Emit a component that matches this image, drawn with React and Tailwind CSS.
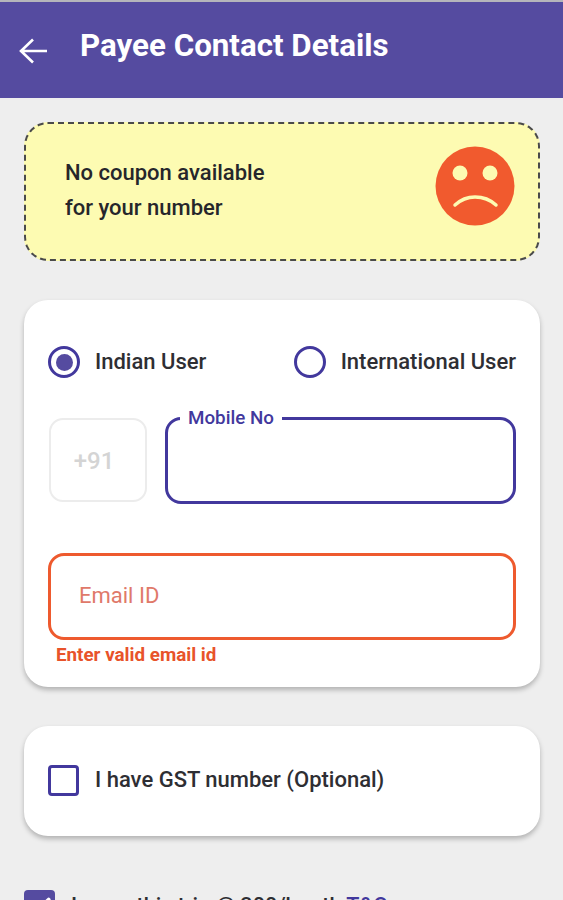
import React from "react";
import { Check } from "lucide-react";

const font = { fontFamily: "Roboto, sans-serif" };

const Radio = ({ checked, label }) => (
  <div className="flex items-center gap-[15px]">
    <div className="w-8 h-8 rounded-full border-[3px] border-[#42389d] flex items-center justify-center">
      {checked && <div className="w-[17px] h-[17px] rounded-full bg-[#554ba0]" />}
    </div>
    <span className="text-[22px] font-medium text-[#2e2e33] -mt-[1px]">{label}</span>
  </div>
);

const App = () => {
  return (
    <div className="w-[563px] h-[900px] overflow-hidden bg-[#eeeeee]" style={font}>
      <div className="h-[98px] bg-[#554ba0] border-t-2 border-[#b5b5bb] flex items-start pl-[19px] pt-[27px] gap-[33px]">
        <svg width="28" height="26" viewBox="0 0 28 26" fill="none" stroke="white" strokeWidth="2.6" className="mt-[9px]">
          <path d="M28 13H3M14 1.500 2 13l12 11.500" />
        </svg>
        <span className="text-[31.3px] leading-[34px] font-bold text-white">Payee Contact Details</span>
      </div>

      <div className="pl-6 pr-[23px]">
        <div className="mt-6 h-[139px] rounded-[24px] border-2 border-dashed border-[#4a4a4a] bg-[#fdfbb2] flex items-center justify-between pl-[39px] pr-[23px]">
          <div className="text-[22px] leading-[35px] font-medium text-[#26262b] -mt-[3px]">
            <div>No coupon available</div>
            <div>for your number</div>
          </div>
          <svg width="80" height="80" viewBox="0 0 80 80" className="mb-[12px]">
            <circle cx="40" cy="40" r="39.500" fill="#f15a2e" />
            <circle cx="25" cy="27" r="7.500" fill="#fdfbb2" />
            <circle cx="55" cy="27" r="7.500" fill="#fdfbb2" />
            <path d="M20 59c6-5.500 13-8 20-8s15 2.500 21 8" fill="none" stroke="#fdfbb2" strokeWidth="3.500" strokeLinecap="round" />
          </svg>
        </div>

        <div className="mt-[39px] h-[387px] bg-white rounded-[24px] shadow-[0_3px_5px_rgba(0,0,0,0.25)] px-6 pt-[46px]">
          <div className="flex justify-between">
            <Radio checked label="Indian User" />
            <Radio label="International User" />
          </div>

          <div className="flex gap-[18px] mt-[39px] items-start">
            <div className="ml-[1px] w-[98px] h-[84px] mt-[1px] rounded-[14px] border-2 border-[#ececec] flex items-center justify-center pr-2 pt-[2px] text-[24px] font-medium text-[#d4d4d4]">
              +91
            </div>
            <div className="relative flex-1 h-[87px] rounded-[16px] border-[3px] border-[#42389d]">
              <span className="absolute -top-[14px] left-[12px] px-2 bg-white text-[18.800px] leading-[24px] font-medium text-[#42389d]">
                Mobile No
              </span>
            </div>
          </div>

          <div className="mt-[49px] h-[87px] rounded-[16px] border-[3px] border-[#ee5a2e] flex items-center pl-[28px] pb-[3px] text-[22px] text-[#e0796a]">
            Email ID
          </div>
          <div className="mt-[3px] ml-2 text-[18.800px] leading-[24px] font-bold text-[#e8532a]">Enter valid email id</div>
        </div>

        <div className="mt-[39px] h-[110px] bg-white rounded-[24px] shadow-[0_3px_5px_rgba(0,0,0,0.25)] px-6 flex items-center gap-4">
          <div className="w-[31px] h-[31px] rounded-[4px] border-[3px] border-[#42389d] mb-[2px]" />
          <span className="text-[22px] font-medium text-[#2e2e33] mb-[3px]">I have GST number (Optional)</span>
        </div>

        <div className="mt-[54px] flex items-start gap-4">
          <div className="w-[31px] h-[31px] rounded-[4px] bg-[#554ba0] flex items-center justify-center">
            <Check size={26} color="white" strokeWidth={3.5} />
          </div>
          <span className="text-[21.600px] font-medium text-[#2e2e33] whitespace-nowrap">
            Insure this trip @ 300/booth <span className="text-[#42389d]">T&C</span>
          </span>
        </div>
      </div>
    </div>
  );
};

export default App;
